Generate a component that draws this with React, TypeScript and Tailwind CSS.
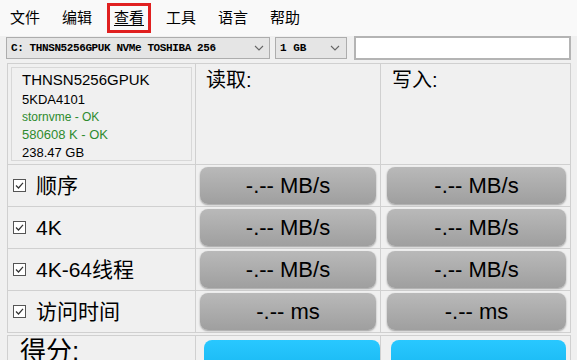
import React from "react";

const menus = ["文件", "编辑", "查看", "工具", "语言", "帮助"];

const rows = [
  { label: "顺序", unit: "MB/s" },
  { label: "4K", unit: "MB/s" },
  { label: "4K-64线程", unit: "MB/s" },
  { label: "访问时间", unit: "ms" },
];

const font = { fontFamily: "Arial" };

function CheckBox() {
  return (
    <svg width="13" height="13" viewBox="0 0 13 13" className="shrink-0">
      <rect x="0.5" y="0.5" width="12" height="12" fill="#fff" stroke="#555" />
      <path d="M3 6.5 L5.5 9 L10 3.8" fill="none" stroke="#333" strokeWidth="1.2" />
    </svg>
  );
}

function Chevron() {
  return (
    <svg width="10" height="6" viewBox="0 0 10 6">
      <path d="M1 1 L5 5 L9 1" fill="none" stroke="#666" strokeWidth="1.1" />
    </svg>
  );
}

function Result({ text }: { text: string }) {
  return (
    <div className="flex h-full items-center justify-center rounded-lg bg-gradient-to-b from-[#b9b9b9] to-[#9f9f9f] text-[22px] leading-none text-black shadow-[0_1px_2px_rgba(0,0,0,0.35)]">
      {text}
    </div>
  );
}

export default function App() {
  return (
    <div className="flex h-[360px] w-[577px] flex-col overflow-hidden bg-[#f0f0f0] font-['Liberation_Sans','Noto_Sans_CJK_SC',sans-serif] text-black">
      {/* 菜单 */}
      <div className="-ml-[1px] flex h-[36px] shrink-0 items-center bg-[#f9f9f9] text-[15px]">
        {menus.map((m) => (
          <div key={m} className="flex w-[52px] justify-center">
            <div
              className={
                m === "查看"
                  ? "flex h-[30px] w-[44px] items-center justify-center border-[3px] border-[#e02020] underline underline-offset-2"
                  : "flex h-[30px] items-center"
              }
            >
              {m}
            </div>
          </div>
        ))}
      </div>

      {/* 驱动器 / 大小 / 备注 */}
      <div className="flex h-[24px] shrink-0 items-center gap-[5px] px-[6px]">
        <div className="flex h-[22px] w-[264px] items-center justify-between border border-[#adadad] bg-[#e5e5e5] pl-[4px] pr-[5px] font-['Liberation_Mono',monospace] text-[11px] font-bold tracking-[-0.4px]">
          <span>C: THNSN5256GPUK NVMe TOSHIBA 256</span>
          <Chevron />
        </div>
        <div className="flex h-[22px] w-[72px] items-center justify-between border border-[#adadad] bg-[#e5e5e5] pl-[4px] pr-[6px] font-['Liberation_Mono',monospace] text-[11px] font-bold">
          <span>1 GB</span>
          <Chevron />
        </div>
        <div className="ml-[2px] h-[24px] w-[217px] border-2 border-[#b4b4b4] bg-white" />
      </div>

      {/* 主表 */}
      <div className="mt-[3px] ml-[7px] grid w-[564px] shrink-0 grid-cols-[189px_185px_190px] grid-rows-[102px_42px_42px_42px_42px_40px]">
        <div className="border border-[#d0d0d0] p-[3px]">
          <div className="h-full border border-[#d8d8d8] bg-[#f0f0f0] pl-[10px] pt-[1px]" style={font}>
            <div className="text-[15px] leading-[21px]">THNSN5256GPUK</div>
            <div className="text-[13px] leading-[19px]">5KDA4101</div>
            <div className="text-[12px] leading-[17px] text-[#2e8b2e]">stornvme - OK</div>
            <div className="text-[13px] leading-[18px] text-[#2e8b2e]">580608 K - OK</div>
            <div className="text-[13px] leading-[18px]">238.47 GB</div>
          </div>
        </div>
        <div className="border border-l-0 border-[#d0d0d0] pl-[10px] pt-[1px] text-[20px] leading-[30px]">
          读取:
        </div>
        <div className="border border-l-0 border-[#d0d0d0] pl-[11px] pt-[1px] text-[20px] leading-[30px]">
          写入:
        </div>

        {rows.map((r) => (
          <React.Fragment key={r.label}>
            <div className="flex items-center gap-[10px] border border-t-0 border-[#d0d0d0] pl-[5px] text-[21px]">
              <CheckBox />
              <span>{r.label}</span>
            </div>
            <div className="border-b border-r border-[#d0d0d0] py-[2px] pl-[4px] pr-[4px]" style={font}>
              <Result text={`-.-- ${r.unit}`} />
            </div>
            <div className="border-b border-r border-[#d0d0d0] py-[2px] pl-[6px] pr-[4px]" style={font}>
              <Result text={`-.-- ${r.unit}`} />
            </div>
          </React.Fragment>
        ))}

        <div className="mt-[2px] border border-[#d0d0d0] pl-[12px] text-[26px] leading-[30px]">得分:</div>
        <div className="mt-[2px] border border-l-0 border-[#d0d0d0] pl-[8px] pr-0 pt-[4px]">
          <div className="h-[40px] rounded-t-lg bg-gradient-to-b from-[#29c8ff] to-[#10b4ee]" />
        </div>
        <div className="mt-[2px] border border-l-0 border-[#d0d0d0] pl-[10px] pr-[4px] pt-[4px]">
          <div className="h-[40px] rounded-t-lg bg-gradient-to-b from-[#29c8ff] to-[#10b4ee]" />
        </div>
      </div>
    </div>
  );
}
